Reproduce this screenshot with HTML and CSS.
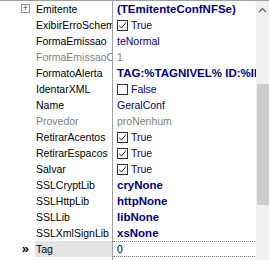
FILE: index.html
```html
<!DOCTYPE html>
<html lang="en">
<head>
    <meta charset="UTF-8">
    <title>Object Inspector</title>
    <link rel="stylesheet" href="styles.css">
</head>
<body>

<div class="inspector">
    <div class="grid">
        <div class="row">
            <span class="gutter"><span class="expand">+</span></span>
            <span class="name">Emitente</span>
            <span class="value bold">(TEmitenteConfNFSe)</span>
        </div>
        <div class="row">
            <span class="gutter"></span>
            <span class="name">ExibirErroSchema</span>
            <span class="value"><svg class="check" width="11" height="11" viewBox="0 0 11 11"><rect x="0.5" y="0.5" width="10" height="10" fill="#fff" stroke="#333"/><polyline points="2,5.5 4.5,8 9,2.5" fill="none" stroke="#222" stroke-width="1"/></svg>True</span>
        </div>
        <div class="row">
            <span class="gutter"></span>
            <span class="name">FormaEmissao</span>
            <span class="value">teNormal</span>
        </div>
        <div class="row">
            <span class="gutter"></span>
            <span class="name muted">FormaEmissaoCodigo</span>
            <span class="value muted">1</span>
        </div>
        <div class="row">
            <span class="gutter"></span>
            <span class="name">FormatoAlerta</span>
            <span class="value bold">TAG:%TAGNIVEL% ID:%ID%/%TAG%(%DESCRICAO%)</span>
        </div>
        <div class="row">
            <span class="gutter"></span>
            <span class="name">IdentarXML</span>
            <span class="value"><svg class="check" width="11" height="11" viewBox="0 0 11 11"><rect x="0.5" y="0.5" width="10" height="10" fill="#fff" stroke="#333"/></svg>False</span>
        </div>
        <div class="row">
            <span class="gutter"></span>
            <span class="name">Name</span>
            <span class="value">GeralConf</span>
        </div>
        <div class="row">
            <span class="gutter"></span>
            <span class="name muted">Provedor</span>
            <span class="value muted">proNenhum</span>
        </div>
        <div class="row">
            <span class="gutter"></span>
            <span class="name">RetirarAcentos</span>
            <span class="value"><svg class="check" width="11" height="11" viewBox="0 0 11 11"><rect x="0.5" y="0.5" width="10" height="10" fill="#fff" stroke="#333"/><polyline points="2,5.5 4.5,8 9,2.5" fill="none" stroke="#222" stroke-width="1"/></svg>True</span>
        </div>
        <div class="row">
            <span class="gutter"></span>
            <span class="name">RetirarEspacos</span>
            <span class="value"><svg class="check" width="11" height="11" viewBox="0 0 11 11"><rect x="0.5" y="0.5" width="10" height="10" fill="#fff" stroke="#333"/><polyline points="2,5.5 4.5,8 9,2.5" fill="none" stroke="#222" stroke-width="1"/></svg>True</span>
        </div>
        <div class="row">
            <span class="gutter"></span>
            <span class="name">Salvar</span>
            <span class="value"><svg class="check" width="11" height="11" viewBox="0 0 11 11"><rect x="0.5" y="0.5" width="10" height="10" fill="#fff" stroke="#333"/><polyline points="2,5.5 4.5,8 9,2.5" fill="none" stroke="#222" stroke-width="1"/></svg>True</span>
        </div>
        <div class="row">
            <span class="gutter"></span>
            <span class="name">SSLCryptLib</span>
            <span class="value bold">cryNone</span>
        </div>
        <div class="row">
            <span class="gutter"></span>
            <span class="name">SSLHttpLib</span>
            <span class="value bold">httpNone</span>
        </div>
        <div class="row">
            <span class="gutter"></span>
            <span class="name">SSLLib</span>
            <span class="value bold">libNone</span>
        </div>
        <div class="row">
            <span class="gutter"></span>
            <span class="name">SSLXmlSignLib</span>
            <span class="value bold">xsNone</span>
        </div>
        <div class="row selected">
            <span class="gutter"><span class="marker">&raquo;</span></span>
            <span class="name">Tag</span>
            <span class="value plain">0</span>
        </div>
        <div class="row">
            <span class="gutter"></span>
            <span class="name"></span>
            <span class="value"></span>
        </div>
    </div>
    <div class="scrollbar">
        <span class="arrow"><svg width="9" height="6" viewBox="0 0 9 6"><polyline points="1,5 4.5,1.5 8,5" fill="none" stroke="#606060" stroke-width="1.2"/></svg></span>
        <div class="thumb"></div>
    </div>
</div>

</body>
</html>
```

FILE: styles.css
```css
body {
    margin: 0;
    background-color: white;
    font-family: "Liberation Sans", Arial, sans-serif;
    font-size: 10.5px;
}

.inspector {
    display: flex;
    width: 269px;
    height: 259px;
    border-top: 1px solid #a0a0a0;
    overflow: hidden;
}

.grid {
    flex: 1;
    display: flex;
    flex-direction: column;
    min-width: 0;
}

.row {
    display: flex;
    height: 16px;
    line-height: 16px;
    flex-shrink: 0;
}

.gutter {
    width: 35px;
    flex-shrink: 0;
    display: flex;
    align-items: center;
    justify-content: flex-end;
    padding-right: 4px;
    box-sizing: border-box;
}

.expand {
    width: 7px;
    height: 7px;
    border: 1px solid #919191;
    font-size: 9px;
    line-height: 7px;
    text-align: center;
    color: #404040;
    margin-bottom: 2px;
    margin-right: 1px;
}

.marker {
    font-size: 13px;
    font-weight: bold;
    color: #000;
    padding-right: 2px;
}

.name {
    width: 76px;
    flex-shrink: 0;
    padding-left: 1px;
    border-right: 1px solid #a0a0a0;
    color: black;
    white-space: nowrap;
    overflow: hidden;
}

.value {
    flex: 1;
    min-width: 0;
    padding-left: 4px;
    color: #000080;
    white-space: nowrap;
    overflow: hidden;
    display: flex;
    align-items: center;
}

.value.bold {
    font-size: 11.5px;
    font-weight: bold;
}

.muted,
.value.muted {
    color: #808080;
}

.check {
    margin-right: 3px;
    flex-shrink: 0;
}

.selected .name {
    background-color: #e3e3e3;
}

.selected .value {
    color: black;
    border-top: 1px dotted #808080;
    border-bottom: 1px dotted #808080;
    box-sizing: border-box;
    margin-right: 1px;
}

.scrollbar {
    width: 13px;
    flex-shrink: 0;
    background-color: #f0f0f0;
    display: flex;
    flex-direction: column;
    align-items: center;
}

.arrow {
    height: 17px;
    display: flex;
    align-items: center;
}

.thumb {
    width: 12px;
    height: 121px;
    margin-top: 66px;
    background-color: #cdcdcd;
}
```
